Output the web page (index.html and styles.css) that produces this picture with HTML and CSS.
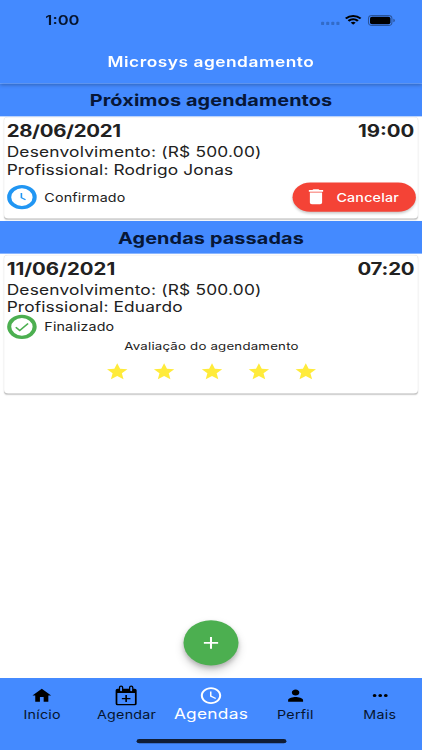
FILE: index.html
```html
<!DOCTYPE html>
<html lang="pt-BR">
<head>
<meta charset="utf-8">
<title>Microsys agendamento</title>
<link rel="stylesheet" href="styles.css">
</head>
<body>
<div class="screen">
  <header class="appbar">
    <div class="status">
      <span class="clock">1:00</span>
      <div class="indicators">
        <span class="dots"><i></i><i></i><i></i><i></i></span>
        <svg class="wifi" viewBox="0 0 17 12"><path d="M8.5 2.3c2.4 0 4.6.9 6.3 2.5.1.1.3.1.4 0l1.2-1.2c.1-.1.1-.3 0-.5a11.400 11.400 0 0 0-15.800 0c-.1.2-.1.400 0 .5l1.200 1.200c.1.1.3.1.4 0A9.200 9.200 0 0 1 8.500 2.300zm0 4c1.300 0 2.600.5 3.500 1.400.2.1.4.1.5 0l1.200-1.300c.1-.1.1-.3 0-.5a7.600 7.600 0 0 0-10.400 0c-.1.200-.1.400 0 .5l1.200 1.300c.1.1.3.1.5 0a5.100 5.100 0 0 1 3.500-1.400zm2.300 3c.1-.1.1-.3 0-.4a3.600 3.600 0 0 0-4.600 0c-.1.1-.1.300 0 .4l2.100 2.100c.1.1.3.1.4 0z"/></svg>
        <svg class="battery" viewBox="0 0 27 13"><rect x=".5" y=".5" width="23" height="12" rx="3.500" fill="none" stroke="#000" stroke-opacity=".4"/><path d="M25 4.500v4c.8-.3 1.300-1.100 1.300-2s-.5-1.700-1.300-2z" opacity=".45"/><rect x="2" y="2" width="20" height="9" rx="2"/></svg>
      </div>
    </div>
    <h1 class="title"><span>Microsys agendamento</span></h1>
  </header>

  <main class="content">
    <h2 class="section"><span>Próximos agendamentos</span></h2>
    <article class="card upcoming">
      <div class="when"><span class="date tight">28/06/2021</span><span class="time">19:00</span></div>
      <p class="line service">Desenvolvimento: (R$ 500.00)</p>
      <p class="line">Profissional: Rodrigo Jonas</p>
      <div class="state">
        <span class="badge confirmed"><svg viewBox="0 0 24 24"><path d="M11.300 5v8l5.700 3.500" fill="none" stroke="#2196f3" stroke-width="2.200"/></svg></span>
        <span class="label">Confirmado</span>
        <button class="cancel"><svg viewBox="0 0 24 24"><path d="M6 19c0 1.100.9 2 2 2h8c1.100 0 2-.9 2-2V7H6v12zM19 4h-3.500l-1-1h-5l-1 1H5v2h14V4z"/></svg><span>Cancelar</span></button>
      </div>
    </article>

    <h2 class="section past"><span>Agendas passadas</span></h2>
    <article class="card done">
      <div class="when"><span class="date">11/06/2021</span><span class="time tight-time">07:20</span></div>
      <p class="line service">Desenvolvimento: (R$ 500.00)</p>
      <p class="line">Profissional: Eduardo</p>
      <div class="state">
        <span class="badge finished"><svg viewBox="0 0 24 24"><path d="M3.500 12.500l5.500 5.500 11.500-11.500" fill="none" stroke="#4caf50" stroke-width="2.400"/></svg></span>
        <span class="label">Finalizado</span>
      </div>
      <p class="rating"><span>Avaliação do agendamento</span></p>
      <div class="stars">
        <svg viewBox="0 0 24 24"><path d="M12 17.270L18.180 21l-1.640-7.030L22 9.240l-7.190-.61L12 2 9.190 8.630 2 9.240l5.460 4.730L5.820 21z"/></svg>
        <svg viewBox="0 0 24 24"><path d="M12 17.270L18.180 21l-1.640-7.030L22 9.240l-7.190-.61L12 2 9.190 8.630 2 9.240l5.460 4.730L5.820 21z"/></svg>
        <svg viewBox="0 0 24 24"><path d="M12 17.270L18.180 21l-1.640-7.030L22 9.240l-7.190-.61L12 2 9.190 8.630 2 9.240l5.460 4.730L5.820 21z"/></svg>
        <svg viewBox="0 0 24 24"><path d="M12 17.270L18.180 21l-1.640-7.030L22 9.240l-7.190-.61L12 2 9.190 8.630 2 9.240l5.460 4.730L5.820 21z"/></svg>
        <svg viewBox="0 0 24 24"><path d="M12 17.270L18.180 21l-1.640-7.030L22 9.240l-7.190-.61L12 2 9.190 8.630 2 9.240l5.460 4.730L5.820 21z"/></svg>
      </div>
    </article>
    <button class="fab" aria-label="Novo"><svg viewBox="0 0 24 24"><path d="M19 13h-6v6h-2v-6H5v-2h6V5h2v6h6v2z"/></svg></button>
  </main>

  <nav class="tabs">
    <div class="tab"><svg viewBox="0 0 24 24"><path d="M10 20v-6h4v6h5v-8h3L12 3 2 12h3v8z"/></svg><span>Início</span></div>
    <div class="tab calendar"><svg viewBox="0 0 24 24"><path fill-rule="evenodd" d="M3 3h18a2 2 0 0 1 2 2V22a2 2 0 0 1-2 2H3a2 2 0 0 1-2-2V5a2 2 0 0 1 2-2zM2.800 8.500v13.200c0 .4.200.600.600.600h17.200c.4 0 .6-.2.600-.6V8.500z"/><path d="M6.700 1.200v3.600M17.300 1.200v3.600" fill="none" stroke="#000" stroke-width="4.600" stroke-linecap="round"/><path d="M6.700 1.600v3.600M17.300 1.600v3.600" fill="none" stroke="#448aff" stroke-width="2" stroke-linecap="round"/><path d="M12 11v9M7.500 15.500h9" fill="none" stroke="#000" stroke-width="1.700"/></svg><span>Agendar</span></div>
    <div class="tab active"><svg viewBox="0 0 24 24"><path d="M12 2C6.500 2 2 6.500 2 12s4.500 10 10 10 10-4.500 10-10S17.500 2 12 2zm0 18c-4.420 0-8-3.580-8-8s3.580-8 8-8 8 3.580 8 8-3.580 8-8 8zm.5-13H11v6l5.250 3.150.75-1.230-4.500-2.670z"/></svg><span>Agendas</span></div>
    <div class="tab"><svg viewBox="0 0 24 24"><path d="M12 12c2.210 0 4-1.790 4-4s-1.790-4-4-4-4 1.790-4 4 1.790 4 4 4zm0 2c-2.670 0-8 1.340-8 4v2h16v-2c0-2.660-5.330-4-8-4z"/></svg><span>Perfil</span></div>
    <div class="tab"><svg viewBox="0 0 24 24"><path d="M6 10a2 2 0 1 0 0 4 2 2 0 0 0 0-4zm12 0a2 2 0 1 0 0 4 2 2 0 0 0 0-4zm-6 0a2 2 0 1 0 0 4 2 2 0 0 0 0-4z"/></svg><span>Mais</span></div>
    <div class="home-bar"></div>
  </nav>
</div>
</body>
</html>
```
FILE: styles.css
```css
* { box-sizing: border-box; margin: 0; padding: 0; }
html, body { width: 422px; height: 750px; overflow: hidden; background: #fff; }

/* 414x896 logical phone screen fitted to the 422x750 window */
.screen {
  width: 414px; height: 896px; margin-bottom: -146px;
  display: flex; flex-direction: column;
  transform: scale(1.01932, .83705); transform-origin: 0 0;
  font-family: Inter, "Liberation Sans", sans-serif;
  color: #212121; background: #fff;
  white-space: nowrap;
}
button { border: 0; font: inherit; }
svg { display: block; flex: none; overflow: visible; }

.appbar { height: 100px; flex: none; background: #448aff; box-shadow: 0 1px 4px rgba(0,0,0,.28); z-index: 1; position: relative; }
.status { height: 44px; padding: 4px 20px 0 44.500px; display: flex; justify-content: space-between; align-items: center; }
.clock { font-size: 16.300px; font-weight: 600; color: #06142e; }
.indicators { display: flex; align-items: center; padding-right: 6px; }
.dots { display: flex; gap: 2px; padding-top: 8px; margin-right: 5px; }
.dots i { width: 3px; height: 3.400px; border-radius: 1px; background: #326bc8; }
.wifi { width: 17px; height: 12px; margin-right: 6px; }
.battery { width: 27px; height: 13px; }
.title { height: 56px; padding-top: 3px; display: flex; align-items: center; justify-content: center; font-size: 17px; font-weight: 600; letter-spacing: .5px; color: #fff; }

.content { flex: 1; position: relative; }
.section { height: 38.500px; padding-top: 2px; background: #448aff; display: flex; align-items: center; justify-content: center; font-size: 19.500px; font-weight: 700; color: #071737; letter-spacing: .1px; }
.past { height: 39px; margin-top: 3.500px; padding-top: 0; }
.card { margin: 1.500px 4px 0; padding: 5px 3.500px 0 2.500px; border-radius: 4px; background: #fff; box-shadow: 0 1px 1.500px rgba(0,0,0,.2), 0 0 1px rgba(0,0,0,.12); }
.upcoming { height: 120.500px; }
.done { height: 165px; }
.when { height: 24px; display: flex; justify-content: space-between; align-items: center; font-size: 20px; font-weight: 700; }
.tight { letter-spacing: -.3px; }
.tight-time { letter-spacing: -.2px; }
.line { height: 20.300px; line-height: 20.300px; font-size: 17px; letter-spacing: .12px; }
.service { letter-spacing: .2px; }
.when + .line { margin-top: 3.400px; }
.state { display: flex; align-items: center; height: 36px; }
.upcoming .state { margin-top: 4.200px; }
.done .state { height: 29px; margin-top: -1px; }
.badge { width: 29px; height: 29px; border-radius: 50%; border: 4.500px solid; display: flex; align-items: center; justify-content: center; }
.badge svg { width: 17px; height: 17px; }
.confirmed { border-color: #2196f3; }
.finished { border-color: #4caf50; }
.label { font-size: 14px; letter-spacing: .15px; margin-left: 8px; }
.cancel { margin-left: auto; width: 121px; height: 35px; border-radius: 18px; background: #f44336; color: #fff; display: flex; align-items: center; padding-left: 11px; box-shadow: 0 2px 3px rgba(0,0,0,.22); margin-right: -1.500px; }
.cancel svg { width: 24px; height: 24px; fill: #fff; margin-right: 8px; }
.cancel span { font-size: 14px; font-weight: 500; letter-spacing: .2px; }
.rating { height: 18px; margin-top: -1.500px; padding-left: 2px; display: flex; justify-content: center; align-items: center; font-size: 13px; letter-spacing: .2px; }
.stars { height: 45px; padding-left: 2px; display: flex; align-items: center; justify-content: center; gap: 22.400px; }
.stars svg { width: 24px; height: 24px; fill: #ffeb3b; }

.fab { position: absolute; left: 179.500px; bottom: 15px; width: 54.500px; height: 54.500px; border-radius: 50%; background: #4caf50; display: flex; align-items: center; justify-content: center; box-shadow: 0 6px 10px rgba(0,0,0,.18), 0 3px 5px rgba(0,0,0,.18); }
.fab svg { width: 24px; height: 24px; fill: #fff; }

.tabs { height: 86px; flex: none; background: #448aff; display: grid; grid-template-columns: repeat(5, 1fr); position: relative; }
.tab { display: flex; flex-direction: column; align-items: center; padding-top: 10px; font-size: 14px; letter-spacing: .25px; color: #06142e; }
.tab svg { width: 22px; height: 22px; fill: #000; }
.tab span { line-height: 20px; margin-top: 2px; }
.calendar svg { width: 23.500px; height: 22.500px; margin-bottom: -.500px; }
.tab.active { color: #fff; }
.active svg { width: 24px; height: 24px; fill: #fff; margin-top: -1px; }
.active span { font-size: 17px; margin-top: 0; }
.home-bar { position: absolute; left: 133.500px; bottom: 8px; width: 147px; height: 5px; border-radius: 3px; background: #101d35; }
```
